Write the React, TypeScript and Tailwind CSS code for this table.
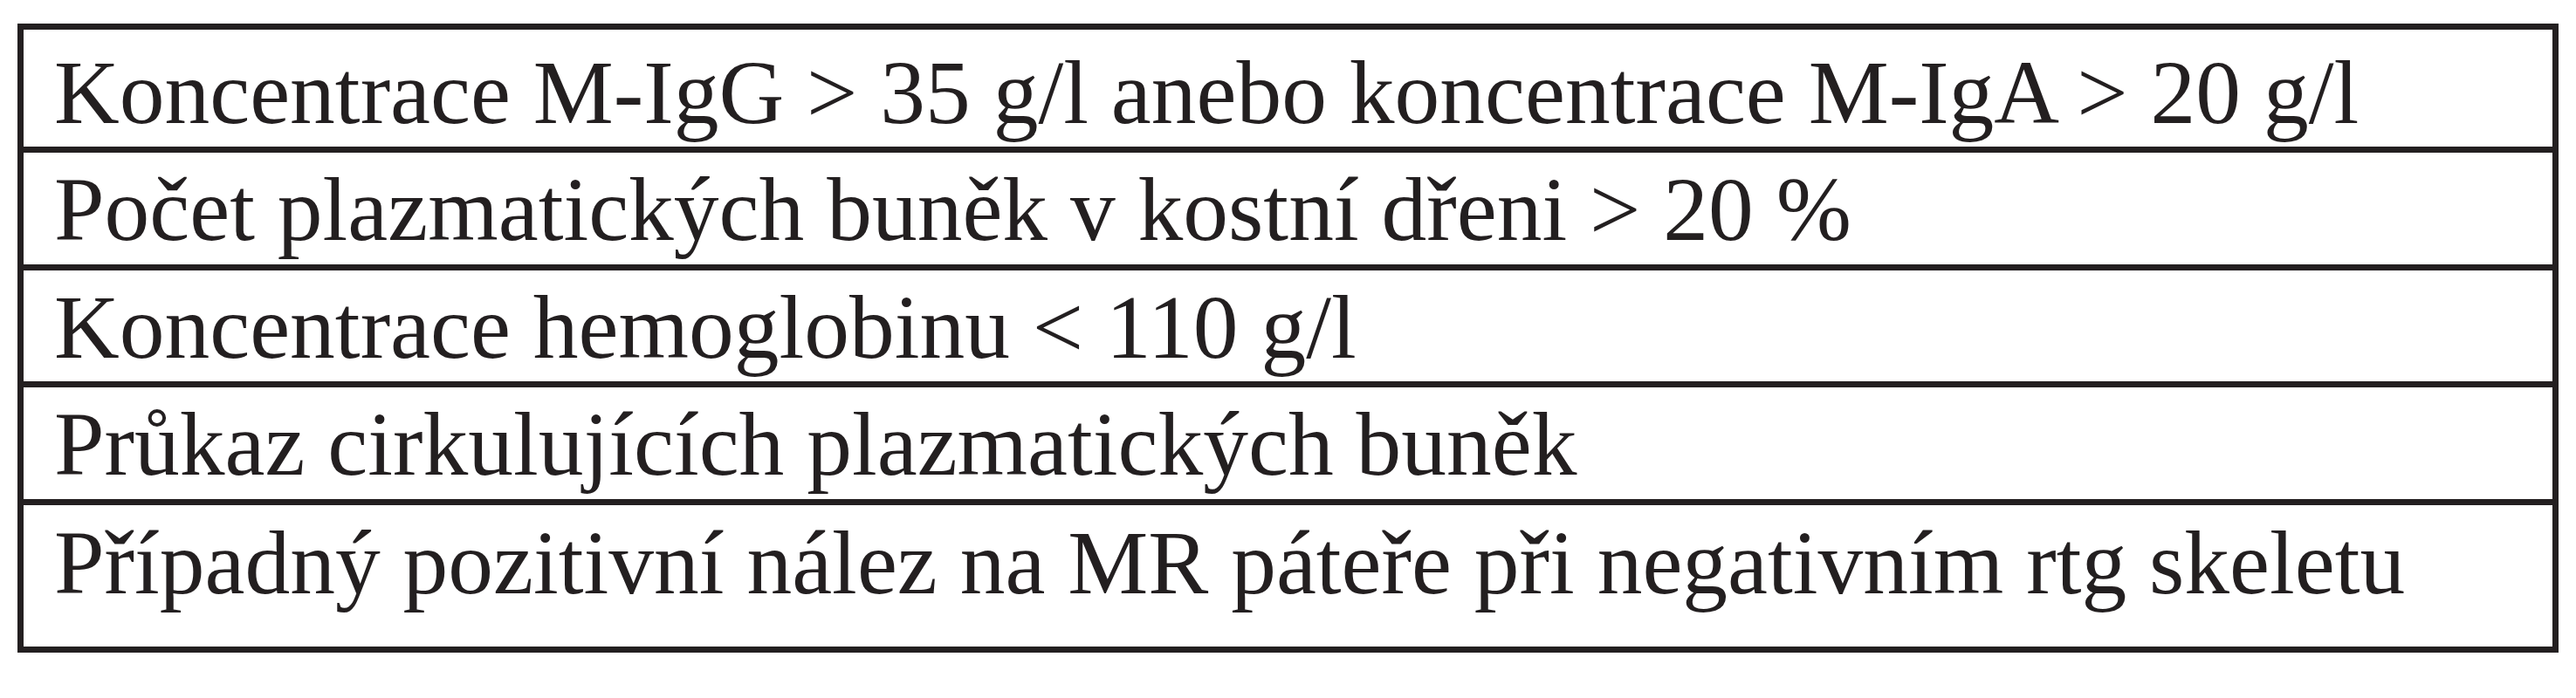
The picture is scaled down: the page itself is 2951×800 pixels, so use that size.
import React from "react";

const rows = [
  { text: "Koncentrace M-IgG > 35 g/l anebo koncentrace M-IgA > 20 g/l", h: "h-[141px] pt-[22px]" },
  { text: "Počet plazmatických buněk v kostní dřeni > 20 %", h: "h-[135px] pt-[15px]" },
  { text: "Koncentrace hemoglobinu < 110 g/l", h: "h-[134px] pt-[15px]" },
  { text: "Průkaz cirkulujících plazmatických buněk", h: "h-[135px] pt-[15px]" },
  { text: "Případný pozitivní nález na MR páteře při negativním rtg skeletu", h: "h-[162px] pt-[16px]" },
];

export default function App() {
  return (
    <div className="h-[800px] w-[2951px] bg-white pl-[20px] pt-[27px]">
      <div className="w-[2911px] border-[7px] border-[#231f20] font-['Liberation_Serif',serif] text-[103.5px] leading-[100px] text-[#231f20]">
        {rows.map((row, i) => (
          <div
            key={i}
            className={`${row.h} pl-[35px] whitespace-nowrap ${
              i < rows.length - 1 ? "border-b-[7px] border-[#231f20]" : ""
            }`}
          >
            {row.text}
          </div>
        ))}
      </div>
    </div>
  );
}
